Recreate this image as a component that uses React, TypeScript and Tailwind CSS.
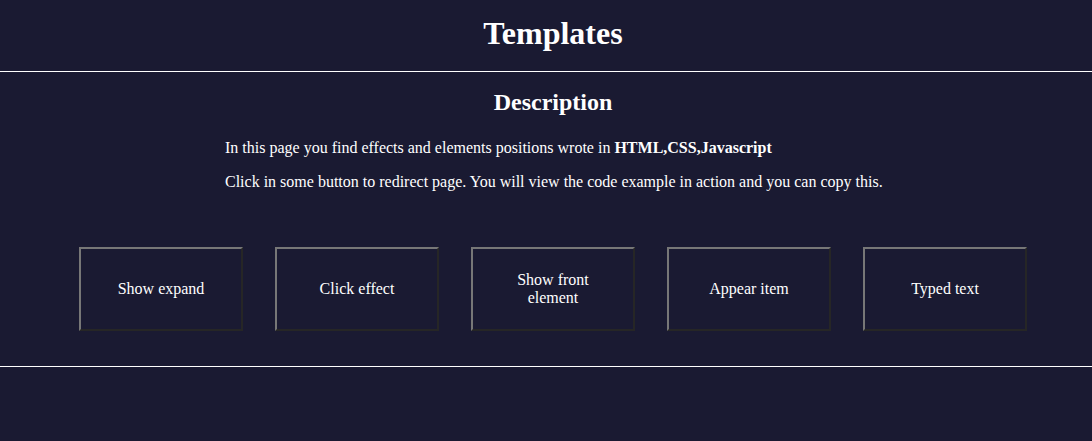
import React from "react";

const items = [
  "Show expand",
  "Click effect",
  "Show front element",
  "Appear item",
  "Typed text",
];

export default function App() {
  return (
    <div
      className="min-h-[441px] w-full bg-[#1a1a32] text-white"
      style={{ fontFamily: '"Liberation Serif", "Times New Roman", serif' }}
    >
      <header className="h-[72px] border-b border-white pl-[14px] pt-[15px]">
        <h1 className="text-center text-[32px] font-bold leading-[37px]">Templates</h1>
      </header>
      <section className="border-b border-white pb-[35px] pl-[14px]">
        <h2 className="pt-[16px] text-center text-[24px] font-bold leading-[28px]">Description</h2>
        <div className="pl-[211px] pt-[23px] text-[16px] leading-[18px]">
          <p>
            In this page you find effects and elements positions wrote in{" "}
            <b>HTML,CSS,Javascript</b>
          </p>
          <p className="mt-[16px]">
            Click in some button to redirect page. You will view the code example in action and you can copy this.
          </p>
        </div>
        <div className="mt-[56px] flex justify-center gap-[32px]">
          {items.map((t) => (
            <button
              key={t}
              className="flex h-[84px] w-[164px] items-center justify-center border-2 border-t-[#777777] border-l-[#777777] border-r-[#262626] border-b-[#262626] bg-[#1a1a32] px-[30px] text-center text-[16px] leading-[18px] text-white"
            >
              {t}
            </button>
          ))}
        </div>
      </section>
    </div>
  );
}
